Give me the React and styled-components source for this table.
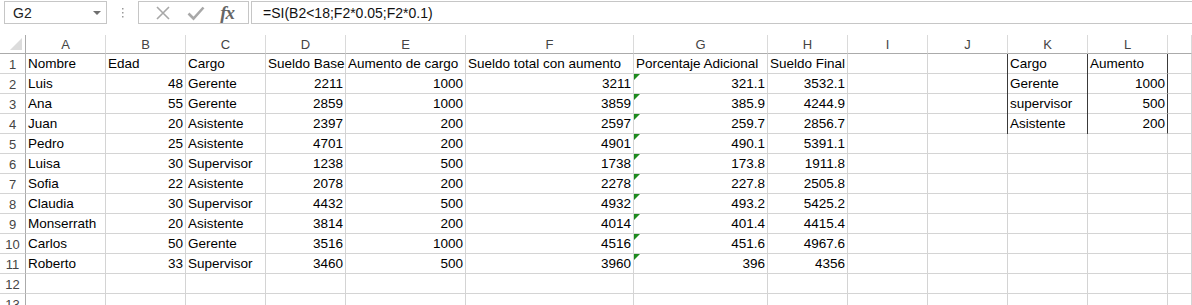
import React from "react";
import styled, { createGlobalStyle, css } from "styled-components";

const GlobalStyle = createGlobalStyle`
  html, body {
    margin: 0;
    padding: 0;
    background: #ffffff;
  }
  body {
    font-family: "Liberation Sans", Arial, sans-serif;
    overflow: hidden;
  }
`;

const Page = styled.div`
  width: 1192px;
  height: 305px;
  overflow: hidden;
  background: #fff;
`;

const FormulaBar = styled.div`
  display: flex;
  align-items: stretch;
  height: 23px;
  padding-top: 1px;
  margin-bottom: 11px;
`;

const NameBox = styled.div`
  box-sizing: border-box;
  width: 103px;
  margin-left: 4px;
  border: 1px solid #c6c6c6;
  display: flex;
  align-items: center;
  justify-content: space-between;
  padding: 0 5px 0 8px;
  font-size: 14px;
  color: #222;
`;

const Arrow = styled.span`
  width: 0;
  height: 0;
  border-left: 4px solid transparent;
  border-right: 4px solid transparent;
  border-top: 4px solid #6f6f6f;
`;

const Grip = styled.div`
  width: 31px;
  display: flex;
  justify-content: center;
  align-items: center;
`;

const IconBox = styled.div`
  box-sizing: border-box;
  width: 111px;
  border: 1px solid #c6c6c6;
  display: flex;
  align-items: center;
  justify-content: space-around;
  padding: 0 6px 0 8px;
`;

const Fx = styled.span`
  font-family: "Liberation Serif", "Times New Roman", serif;
  font-style: italic;
  font-weight: bold;
  font-size: 19px;
  color: #666;
  line-height: 1;
  letter-spacing: -1px;
`;

const FormulaInput = styled.div`
  flex: 1;
  margin-left: 2px;
  border: 1px solid #c6c6c6;
  border-right: none;
  display: flex;
  align-items: center;
  padding-left: 11px;
  font-size: 14px;
  color: #111;
  white-space: nowrap;
`;

const Sheet = styled.div`
  display: grid;
  grid-template-columns: 26px 80px 80px 80px 80px 120px 168px 134px 80px 80px 80px 80px 80px 1fr;
  grid-auto-rows: 20px;
  grid-template-rows: 19px;
`;

const Cell = styled.div`
  position: relative;
  box-sizing: border-box;
  border-right: 1px solid #d4d4d4;
  border-bottom: 1px solid #d4d4d4;
  display: flex;
  align-items: flex-end;
  justify-content: ${(p) => (p.$num ? "flex-end" : "flex-start")};
  padding: 0 2px 1px 2px;
  font-size: 13.5px;
  line-height: 17px;
  color: #000;
  white-space: nowrap;
  overflow: visible;

  ${(p) =>
    p.$boxed &&
    css`
      border-right-color: #3a3a3a;
      box-shadow: -1px 0 0 #3a3a3a;
    `}

  ${(p) =>
    p.$flag &&
    css`
      &::before {
        content: "";
        position: absolute;
        left: 0;
        top: 0;
        border-top: 6px solid #1d8a1d;
        border-right: 6px solid transparent;
      }
    `}
`;

const ColHead = styled.div`
  position: relative;
  box-sizing: border-box;
  border-right: 1px solid #dadada;
  border-bottom: 1px solid #ababab;
  display: flex;
  align-items: center;
  justify-content: center;
  font-size: 13px;
  color: #444;
  padding-top: 1px;
`;

const Corner = styled(ColHead)`
  border-right-color: #ababab;
  &::after {
    content: "";
    position: absolute;
    right: 3px;
    bottom: 3px;
    border-bottom: 12px solid #dcdcdc;
    border-left: 12px solid transparent;
  }
`;

const RowHead = styled.div`
  box-sizing: border-box;
  border-right: 1px solid #ababab;
  border-bottom: 1px solid #d4d4d4;
  display: flex;
  align-items: center;
  justify-content: center;
  font-size: 13px;
  color: #444;
  padding-top: 1px;
`;

const letters = ["A", "B", "C", "D", "E", "F", "G", "H", "I", "J", "K", "L", ""];

const people = [
  ["Luis", 48, "Gerente", 2211, 1000, 3211, "321.1", "3532.1"],
  ["Ana", 55, "Gerente", 2859, 1000, 3859, "385.9", "4244.9"],
  ["Juan", 20, "Asistente", 2397, 200, 2597, "259.7", "2856.7"],
  ["Pedro", 25, "Asistente", 4701, 200, 4901, "490.1", "5391.1"],
  ["Luisa", 30, "Supervisor", 1238, 500, 1738, "173.8", "1911.8"],
  ["Sofia", 22, "Asistente", 2078, 200, 2278, "227.8", "2505.8"],
  ["Claudia", 30, "Supervisor", 4432, 500, 4932, "493.2", "5425.2"],
  ["Monserrath", 20, "Asistente", 3814, 200, 4014, "401.4", "4415.4"],
  ["Carlos", 50, "Gerente", 3516, 1000, 4516, "451.6", "4967.6"],
  ["Roberto", 33, "Supervisor", 3460, 500, 3960, "396", "4356"],
];

const lookup = [
  ["Cargo", "Aumento"],
  ["Gerente", 1000],
  ["supervisor", 500],
  ["Asistente", 200],
];

const header = [
  "Nombre",
  "Edad",
  "Cargo",
  "Sueldo Base",
  "Aumento de cargo",
  "Sueldo total con aumento",
  "Porcentaje Adicional",
  "Sueldo Final",
];

function buildRow(i) {
  // 13 cells (A..M) for row i, 0-based
  let main;
  if (i === 0) main = header;
  else if (i <= people.length) main = people[i - 1];
  else main = ["", "", "", "", "", "", "", ""];
  const side = lookup[i] || ["", ""];
  return [...main, "", "", side[0], side[1], ""];
}

const CancelIcon = () => (
  <svg width="16" height="16" viewBox="0 0 16 16">
    <path d="M2 2 L14 14 M14 2 L2 14" stroke="#a8a8a8" strokeWidth="1.6" fill="none" />
  </svg>
);

const CheckIcon = () => (
  <svg width="18" height="16" viewBox="0 0 18 16">
    <path d="M1.5 8.5 L6.5 13.5 L16.5 2.5" stroke="#a8a8a8" strokeWidth="2.6" fill="none" />
  </svg>
);

const GripIcon = () => (
  <svg width="3" height="12" viewBox="0 0 3 12">
    <rect x="1" y="1" width="1.5" height="1.5" fill="#9a9a9a" />
    <rect x="1" y="5" width="1.5" height="1.5" fill="#9a9a9a" />
    <rect x="1" y="9" width="1.5" height="1.5" fill="#9a9a9a" />
  </svg>
);

const App = () => {
  const rows = Array.from({ length: 13 }, (_, i) => buildRow(i));

  return (
    <Page>
      <GlobalStyle />
      <FormulaBar>
        <NameBox>
          G2
          <Arrow />
        </NameBox>
        <Grip>
          <GripIcon />
        </Grip>
        <IconBox>
          <CancelIcon />
          <CheckIcon />
          <Fx>fx</Fx>
        </IconBox>
        <FormulaInput>=SI(B2&lt;18;F2*0.05;F2*0.1)</FormulaInput>
      </FormulaBar>

      <Sheet>
        <Corner />
        {letters.map((l, i) => (
          <ColHead key={"h" + i}>{l}</ColHead>
        ))}
        {rows.map((row, r) => (
          <React.Fragment key={r}>
            <RowHead>{r + 1}</RowHead>
            {row.map((v, c) => (
              <Cell
                key={c}
                $num={typeof v === "number" || (r > 0 && c >= 6 && c <= 7 && v !== "")}
                $flag={c === 6 && r >= 1 && r <= 10}
                $boxed={(c === 10 || c === 11) && r <= 3}
              >
                {v}
              </Cell>
            ))}
          </React.Fragment>
        ))}
      </Sheet>
    </Page>
  );
};

export default App;
